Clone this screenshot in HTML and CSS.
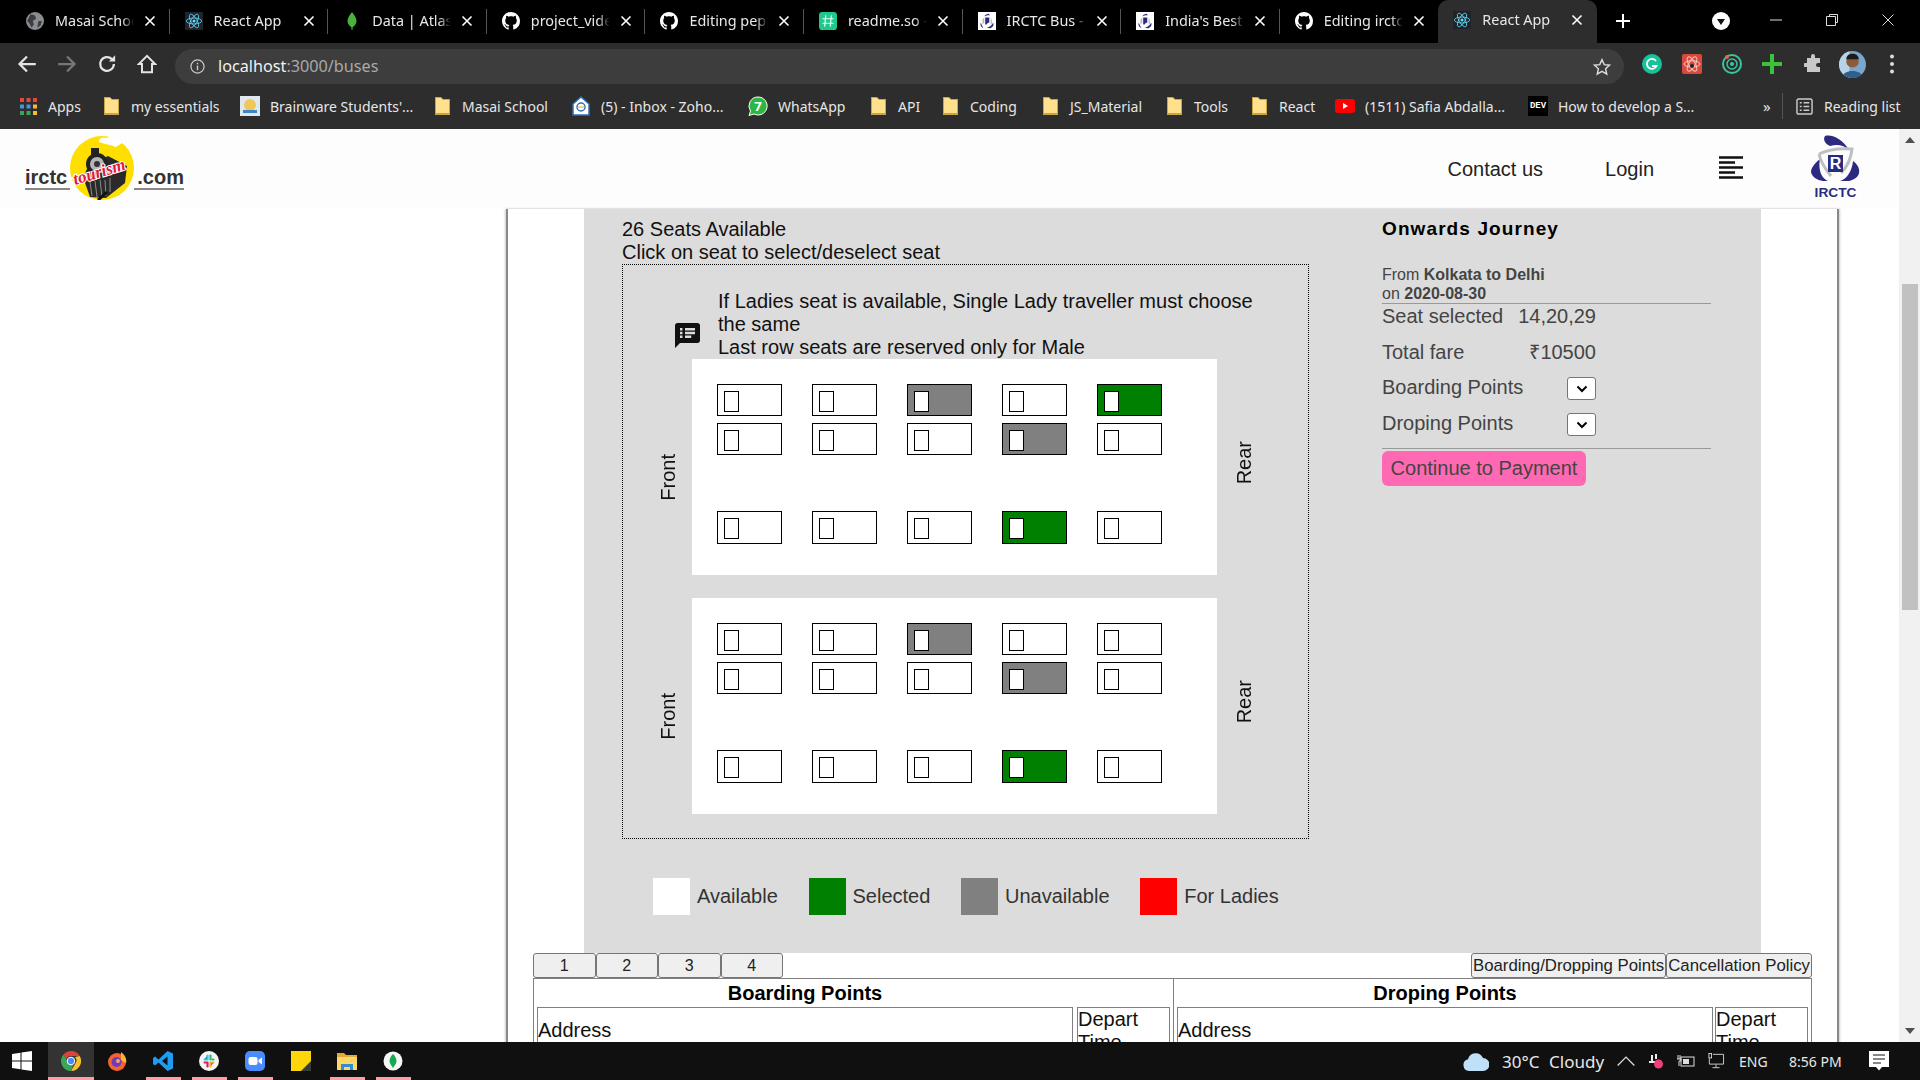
FILE: index.html
```html
<!DOCTYPE html>
<html lang="en">
  <head>
    <meta charset="UTF-8" />
    <title>React App</title>
    <link rel="stylesheet" href="styles.css">
  </head>
  <body>
    <svg class="defs" aria-hidden="true">
      <symbol id="i-close" viewBox="0 0 12 12"><path d="M1.5 1.5l9 9M10.500 1.500l-9 9" stroke="#fff" stroke-width="1.600" fill="none"/></symbol>
      <symbol id="i-globe" viewBox="0 0 16 16"><circle cx="8" cy="8" r="8" fill="#8a8d91"/><path d="M4 2l4 1 1 3-3 2 1 3-2 3-2-4-2-2zM11 8l3 0-1 4-3 2z" fill="#3b3d40"/></symbol>
      <symbol id="i-react" viewBox="0 0 20 20"><rect width="20" height="20" fill="#20232a"/><g fill="none" stroke="#61dafb" stroke-width=".9"><ellipse cx="10" cy="10" rx="8.500" ry="3.300"/><ellipse cx="10" cy="10" rx="8.500" ry="3.300" transform="rotate(60 10 10)"/><ellipse cx="10" cy="10" rx="8.500" ry="3.300" transform="rotate(120 10 10)"/></g><circle cx="10" cy="10" r="1.700" fill="#61dafb"/></symbol>
      <symbol id="i-leaf" viewBox="0 0 12 24"><path d="M6 0c3 4 6 8 6 12 0 4-3 7-5 8l-.5 4h-1L5 20c-2-1-5-4-5-8 0-4 3-8 6-12z" fill="#4caf3e"/></symbol>
      <symbol id="i-github" viewBox="0 0 16 16"><path fill="#fff" d="M8 0C3.58 0 0 3.58 0 8c0 3.54 2.29 6.53 5.47 7.59.4.07.55-.17.55-.38 0-.19-.01-.82-.01-1.49-2.01.37-2.53-.49-2.69-.94-.09-.23-.48-.94-.82-1.13-.28-.15-.68-.52-.01-.53.63-.01 1.08.58 1.23.82.72 1.21 1.87.87 2.33.66.07-.52.28-.87.51-1.07-1.78-.2-3.64-.89-3.64-3.95 0-.87.31-1.59.82-2.15-.08-.2-.36-1.02.08-2.12 0 0 .67-.21 2.2.82.64-.18 1.32-.27 2-.27.68 0 1.360.09 2 .27 1.53-1.04 2.2-.82 2.2-.82.44 1.1.16 1.92.08 2.12.51.56.82 1.27.82 2.15 0 3.07-1.87 3.75-3.65 3.95.29.25.54.73.54 1.48 0 1.07-.01 1.93-.01 2.2 0 .21.15.46.55.38A8.013 8.013 0 0016 8c0-4.42-3.58-8-8-8z"/></symbol>
      <symbol id="i-readme" viewBox="0 0 16 16"><rect width="16" height="16" rx="3" fill="#1fc98e"/><path d="M6 3L5 13M11 3l-1 10M3 6h10M3 10h10" stroke="#d9fff0" stroke-width="1.100"/></symbol>
      <symbol id="i-irctc" viewBox="0 0 20 20"><rect width="20" height="20" fill="#fff"/><path d="M3 12c-1 3 1 5 3 6-1-2-2-4-3-6zM17 12c1 3-1 5-3 6-2 0-3 0-4-1 3 0 5-2 7-5zM7 5c1-2 3-3 5-3 1 1 1 2 1 2-2-1-4 0-6 1z" fill="#2b2a80"/><path d="M8 6h4.500v6H11l-1.500 2H8z" fill="#2b2a80"/><path d="M5 8l2-2v6l-2 2zM15 8l-1-2v7h2z" fill="#b9bcc4"/></symbol>
      <symbol id="i-folder" viewBox="0 0 15 18"><path d="M0 0h6l2 2h7v16H0z" fill="#c9a443"/><path d="M1 1h5l2 2h6v13H1z" fill="#ffe08c"/></symbol>
    </svg>

    <div class="tabstrip">
      <div class="tab"><svg class="tab-icon"><use href="#i-globe"/></svg><span class="tab-title">Masai School | Learn</span><svg class="tab-x"><use href="#i-close"/></svg></div>
      <div class="tab"><svg class="tab-icon"><use href="#i-react"/></svg><span class="tab-title">React App</span><svg class="tab-x"><use href="#i-close"/></svg></div>
      <div class="tab"><svg class="tab-icon"><use href="#i-leaf"/></svg><span class="tab-title">Data | Atlas: MongoDB</span><svg class="tab-x"><use href="#i-close"/></svg></div>
      <div class="tab"><svg class="tab-icon"><use href="#i-github"/></svg><span class="tab-title">project_video_player</span><svg class="tab-x"><use href="#i-close"/></svg></div>
      <div class="tab"><svg class="tab-icon"><use href="#i-github"/></svg><span class="tab-title">Editing pepperfry</span><svg class="tab-x"><use href="#i-close"/></svg></div>
      <div class="tab"><svg class="tab-icon"><use href="#i-readme"/></svg><span class="tab-title">readme.so - </span><svg class="tab-x"><use href="#i-close"/></svg></div>
      <div class="tab"><svg class="tab-icon"><use href="#i-irctc"/></svg><span class="tab-title">IRCTC Bus - </span><svg class="tab-x"><use href="#i-close"/></svg></div>
      <div class="tab"><svg class="tab-icon"><use href="#i-irctc"/></svg><span class="tab-title">India's Best Online</span><svg class="tab-x"><use href="#i-close"/></svg></div>
      <div class="tab tab-before-active"><svg class="tab-icon"><use href="#i-github"/></svg><span class="tab-title">Editing irctc-clone</span><svg class="tab-x"><use href="#i-close"/></svg></div>
      <div class="tab tab-active"><svg class="tab-icon"><use href="#i-react"/></svg><span class="tab-title">React App</span><svg class="tab-x"><use href="#i-close"/></svg></div>
      <svg class="tab-new" viewBox="0 0 16 16"><path d="M8 1v14M1 8h14" stroke="#fff" stroke-width="2"/></svg>
      <svg class="tab-search" viewBox="0 0 18 18"><circle cx="9" cy="9" r="9" fill="#fff"/><path d="M5 7h8l-4 6z" fill="#111"/></svg>
      <div class="win-btns">
        <svg viewBox="0 0 12 12"><path d="M0 6h12" stroke="#ddd"/></svg>
        <svg viewBox="0 0 12 12"><path d="M3.500 2.500V.5h8v8h-2M.5 2.500h9v9h-9z" stroke="#ddd" fill="none"/></svg>
        <svg viewBox="0 0 12 12"><path d="M.5.5l11 11M11.500.5l-11 11" stroke="#ddd" fill="none"/></svg>
      </div>
    </div>

    <div class="toolbar">
      <div class="nav-btn"><svg viewBox="0 0 16 16"><path d="M15 8H2M8 2L2 8l6 6" stroke="#e3e3e3" stroke-width="1.800" fill="none"/></svg></div>
      <div class="nav-btn"><svg viewBox="0 0 16 16"><path d="M1 8h13M8 2l6 6-6 6" stroke="#777" stroke-width="1.800" fill="none"/></svg></div>
      <div class="nav-btn"><svg viewBox="0 0 16 16"><path d="M13.500 8a5.500 5.500 0 1 1-1.600-3.900" stroke="#e3e3e3" stroke-width="1.800" fill="none"/><path d="M14.500 1v5h-5z" fill="#e3e3e3"/></svg></div>
      <div class="nav-btn"><svg viewBox="0 0 16 16"><path d="M8 1.500L1.500 8H4v6.500h8V8h2.500z" stroke="#e3e3e3" stroke-width="1.600" fill="none"/></svg></div>
      <div class="omnibox">
        <svg class="omni-info" viewBox="0 0 16 16"><circle cx="8" cy="8" r="7" stroke="#ccc" stroke-width="1.300" fill="none"/><path d="M8 7v5M8 4v1.600" stroke="#ccc" stroke-width="1.500"/></svg>
        <span class="omni-url"><span class="omni-host">localhost</span>:3000/buses</span>
        <svg class="omni-star" viewBox="0 0 16 16"><path d="M8 1.500l2 4.400 4.700.5-3.500 3.200 1 4.700L8 11.900l-4.200 2.400 1-4.700L1.300 6.400 6 5.900z" stroke="#ddd" stroke-width="1.300" fill="none"/></svg>
      </div>
      <div class="ext-row">
        <div class="nav-btn"><svg viewBox="0 0 20 20"><circle cx="10" cy="10" r="10" fill="#15c39a"/><path d="M14 7a5 5 0 1 0 .5 5H10" stroke="#fff" stroke-width="1.800" fill="none"/></svg></div>
        <div class="nav-btn"><svg viewBox="0 0 20 20"><rect width="20" height="20" rx="2" fill="#d9483b"/><g fill="none" stroke="#f6c9c2" stroke-width="1"><ellipse cx="10" cy="10" rx="8" ry="3.200" transform="rotate(60 10 10)"/><ellipse cx="10" cy="10" rx="8" ry="3.200" transform="rotate(120 10 10)"/><ellipse cx="10" cy="10" rx="8" ry="3.200"/></g><circle cx="10" cy="12" r="2" fill="#222"/></svg></div>
        <div class="nav-btn"><svg viewBox="0 0 20 20"><g fill="none" stroke="#39c6a0"><circle cx="10" cy="10" r="9" stroke-width="2"/><circle cx="10" cy="10" r="5" stroke-width="1.500"/></g><circle cx="10" cy="10" r="2" fill="#39c6a0"/><circle cx="5" cy="3" r="2" fill="#e5693c"/></svg></div>
        <div class="nav-btn"><svg viewBox="0 0 20 20"><path d="M8 0h4v8h8v4h-8v8H8v-8H0V8h8z" fill="#3cc13b"/></svg></div>
        <div class="nav-btn nav-btn-puzzle"><svg viewBox="0 0 20 20"><path d="M7 2a2 2 0 0 1 4 0v2h5v5h-2a2 2 0 0 0 0 4h2v5H3v-5h-2a2 2 0 0 1 0-4h2V4h4z" fill="#c8c8c8"/></svg></div>
        <div class="nav-btn nav-btn-avatar"><svg viewBox="0 0 26 26"><defs><clipPath id="avatar"><circle cx="13" cy="13" r="13"/></clipPath></defs><g clip-path="url(#avatar)"><rect width="26" height="26" fill="#7aa6c9"/><path d="M0 0h10v26H0z" fill="#b9d3e6"/><circle cx="13" cy="10" r="6" fill="#8d5a3c"/><path d="M7 8c0-7 12-7 12 0z" fill="#1d1a1a"/><path d="M3 26c0-9 20-9 20 0z" fill="#2e5f8e"/></g></svg></div>
        <div class="nav-btn"><svg viewBox="0 0 4 16"><circle cx="2" cy="2" r="1.600" fill="#ddd"/><circle cx="2" cy="8" r="1.600" fill="#ddd"/><circle cx="2" cy="14" r="1.600" fill="#ddd"/></svg></div>
      </div>
    </div>

    <div class="bookmarks">
      <div class="bm"><svg class="bm-icon" viewBox="0 0 17 17"><g fill="#e8453c"><rect width="4" height="4"/><rect x="6.500" width="4" height="4"/><rect x="13" width="4" height="4"/></g><g fill="#4a90e2"><rect y="6.500" width="4" height="4"/><rect x="6.500" y="6.500" width="4" height="4"/></g><rect x="13" y="6.500" width="4" height="4" fill="#f9bb2d"/><g fill="#3aa757"><rect y="13" width="4" height="4"/><rect x="6.500" y="13" width="4" height="4"/></g><rect x="13" y="13" width="4" height="4" fill="#f9bb2d"/></svg>Apps</div>
      <div class="bm"><svg class="bm-icon bm-folder"><use href="#i-folder"/></svg>my essentials</div>
      <div class="bm"><svg class="bm-icon bm-wide" viewBox="0 0 20 20"><rect width="20" height="20" fill="#dfe8ef"/><circle cx="10" cy="9" r="6" fill="#f1c75b"/><path d="M3 14h14v3H3z" fill="#3f86c7"/></svg>Brainware Students'...</div>
      <div class="bm"><svg class="bm-icon bm-folder"><use href="#i-folder"/></svg>Masai School</div>
      <div class="bm"><svg class="bm-icon bm-wide" viewBox="0 0 20 20"><path d="M10 1l8 7v11H2V8z" fill="#fff" stroke="#2f6fb7" stroke-width="1.500"/><circle cx="10" cy="11" r="4" fill="none" stroke="#2f6fb7" stroke-width="1.500"/><path d="M6 11h8" stroke="#e7a33c"/></svg>(5) - Inbox - Zoho...</div>
      <div class="bm"><svg class="bm-icon bm-wide" viewBox="0 0 20 20"><path d="M10 1a9 9 0 1 1-4 17l-5 1.500L2.500 15A9 9 0 0 1 10 1z" fill="#2bb741" stroke="#fff"/><text x="10" y="15" class="bm-seven">7</text></svg>WhatsApp</div>
      <div class="bm"><svg class="bm-icon bm-folder"><use href="#i-folder"/></svg>API</div>
      <div class="bm"><svg class="bm-icon bm-folder"><use href="#i-folder"/></svg>Coding</div>
      <div class="bm"><svg class="bm-icon bm-folder"><use href="#i-folder"/></svg>JS_Material</div>
      <div class="bm"><svg class="bm-icon bm-folder"><use href="#i-folder"/></svg>Tools</div>
      <div class="bm"><svg class="bm-icon bm-folder"><use href="#i-folder"/></svg>React</div>
      <div class="bm"><svg class="bm-icon bm-wide" viewBox="0 0 20 14"><rect width="20" height="14" rx="3" fill="#f00"/><path d="M8 4l5 3-5 3z" fill="#fff"/></svg>(1511) Safia Abdalla...</div>
      <div class="bm"><span class="bm-dev">DEV</span>How to develop a S...</div>
      <div class="bm bm-more">»</div>
      <div class="bm bm-reading"><svg class="bm-icon" viewBox="0 0 18 18"><rect x="1" y="1" width="16" height="16" rx="2" stroke="#ccc" stroke-width="1.500" fill="none"/><path d="M4 5h2M8 5h6M4 9h2M8 9h6M4 13h2M8 13h6" stroke="#ccc" stroke-width="1.500"/></svg>Reading list</div>
    </div>

    <div class="viewport">
      <div class="page">
        <header class="site-header">
          <a class="brand">
            <span class="brand-word brand-word-left">irctc</span>
            <svg class="brand-badge" viewBox="0 0 64 64">
              <ellipse cx="32" cy="32" rx="32" ry="32" fill="#ffdf00"/>
              <path d="M29 4c2-3 5-3 7-2 3-2 7-1 9 1 3 0 5 2 7 4l-6 4-6-2-5-1-6-2z" fill="#fff"/>
              <rect x="21" y="12" width="8" height="8" fill="#222"/>
              <path d="M38 20l19 10-2 17-19 15-16-1-7-20 6-12z" fill="#2a2a2a"/>
              <circle cx="27" cy="28" r="11" fill="#222"/>
              <circle cx="27" cy="28" r="7" fill="#b5b5b5"/>
              <circle cx="27" cy="28" r="3" fill="#333"/>
              <path d="M20 46l2 14M25 45l2 16M30 44l2 17M35 44l1 16M40 42v14" stroke="#8c8c8c"/>
              <path d="M28 64l9-8" stroke="#111" stroke-width="3"/>
              <text class="brand-script" x="5" y="49" transform="rotate(-17 5 49)">tourism</text>
            </svg>
            <span class="brand-word brand-word-right">.com</span>
          </a>
          <nav class="site-nav">
            <a class="nav-link nav-contact">Contact us</a>
            <a class="nav-link nav-login">Login</a>
            <svg class="nav-menu" viewBox="0 0 24 23"><path d="M0 1.500h24M0 6.500h16M0 11.500h24M0 16.500h16M0 21.500h24" stroke="#111" stroke-width="2.600"/></svg>
            <div class="irctc-logo">
              <svg viewBox="0 0 49 46">
                <path d="M14 1C22-1 32 5 38 15 33 10 26 9 19 11 13 8 12 4 14 1z" fill="#2b2a80"/>
                <path d="M9 24C3 29 0 33 0 37c1 6 9 10 17 9C10 43 7 34 9 24z" fill="#2b2a80"/>
                <path d="M42 26c4 3 7 7 6 12-1 6-11 10-19 8 7-2 12-10 13-20z" fill="#2b2a80"/>
                <path d="M8 19c10-5 22-6 33-5-1 10-5 18-11 24M8 19c2 9 7 16 12 22" stroke="#bdbfc4" stroke-width="3" fill="none"/>
                <rect x="17" y="20" width="15" height="17" fill="#2b2a80"/>
                <text class="irctc-r" x="24.500" y="34">R</text>
              </svg>
              <span class="irctc-name">IRCTC</span>
            </div>
          </nav>
        </header>

        <main class="sheet">
          <section class="panel">
            <div class="seats-col">
              <p class="seats-head">26 Seats Available<br>Click on seat to select/deselect seat</p>
              <div class="seat-box">
                <div class="notice">
                  <svg class="notice-icon" viewBox="2 2 20 20"><path d="M20 2H4c-1.100 0-1.990.9-1.990 2L2 22l4-4h14c1.100 0 2-.9 2-2V4c0-1.100-.9-2-2-2zM8 14H6v-2h2v2zm0-3H6V9h2v2zm0-3H6V6h2v2zm7 6h-5v-2h5v2zm3-3h-8V9h8v2zm0-3h-8V6h8v2z" fill="#111"/></svg>
                  <p class="notice-text">If Ladies seat is available, Single Lady traveller must choose the same<br>Last row seats are reserved only for Male</p>
                </div>
                <div class="bus">
                  <span class="bus-label bus-front">Front</span>
                  <div class="deck">
                    <div class="seat"><i></i></div><div class="seat"><i></i></div><div class="seat seat-taken"><i></i></div><div class="seat"><i></i></div><div class="seat seat-picked"><i></i></div>
                    <div class="seat"><i></i></div><div class="seat"><i></i></div><div class="seat"><i></i></div><div class="seat seat-taken"><i></i></div><div class="seat"><i></i></div>
                    <div class="seat"><i></i></div><div class="seat"><i></i></div><div class="seat"><i></i></div><div class="seat seat-picked"><i></i></div><div class="seat"><i></i></div>
                  </div>
                  <span class="bus-label bus-rear">Rear</span>
                </div>
                <div class="bus bus-upper">
                  <span class="bus-label bus-front">Front</span>
                  <div class="deck">
                    <div class="seat"><i></i></div><div class="seat"><i></i></div><div class="seat seat-taken"><i></i></div><div class="seat"><i></i></div><div class="seat"><i></i></div>
                    <div class="seat"><i></i></div><div class="seat"><i></i></div><div class="seat"><i></i></div><div class="seat seat-taken"><i></i></div><div class="seat"><i></i></div>
                    <div class="seat"><i></i></div><div class="seat"><i></i></div><div class="seat"><i></i></div><div class="seat seat-picked"><i></i></div><div class="seat"><i></i></div>
                  </div>
                  <span class="bus-label bus-rear">Rear</span>
                </div>
              </div>
              <div class="legend">
                <div class="legend-item"><span class="swatch swatch-free"></span>Available</div>
                <div class="legend-item"><span class="swatch swatch-picked"></span>Selected</div>
                <div class="legend-item"><span class="swatch swatch-taken"></span>Unavailable</div>
                <div class="legend-item"><span class="swatch swatch-ladies"></span>For Ladies</div>
              </div>
            </div>
            <aside class="summary">
              <h3 class="summary-title">Onwards Journey</h3>
              <p class="summary-route">From <b>Kolkata to Delhi</b><br>on <b>2020-08-30</b></p>
              <div class="summary-rows">
                <div class="summary-row"><span>Seat selected</span><span>14,20,29</span></div>
                <div class="summary-row"><span>Total fare</span><span>₹10500</span></div>
                <div class="summary-row"><span>Boarding Points</span><select class="point-select"><option></option></select></div>
                <div class="summary-row"><span>Droping Points</span><select class="point-select"><option></option></select></div>
              </div>
              <button class="pay-btn">Continue to Payment</button>
            </aside>
          </section>

          <section class="details">
            <div class="detail-tabs">
              <div class="tab-group">
                <button class="page-tab page-num">1</button><button class="page-tab page-num">2</button><button class="page-tab page-num">3</button><button class="page-tab page-num">4</button>
              </div>
              <div class="tab-group">
                <button class="page-tab page-text">Boarding/Dropping Points</button><button class="page-tab page-text">Cancellation Policy</button>
              </div>
            </div>
            <div class="points">
              <div class="points-col">
                <h4 class="points-title">Boarding Points</h4>
                <div class="points-cells"><div class="cell cell-address">Address</div><div class="cell">Depart Time</div></div>
              </div>
              <div class="points-col points-col-right">
                <h4 class="points-title">Droping Points</h4>
                <div class="points-cells"><div class="cell cell-address">Address</div><div class="cell">Depart Time</div></div>
              </div>
            </div>
          </section>
        </main>
      </div>
      <div class="scrollbar">
        <span class="scroll-up"></span>
        <span class="scroll-thumb"></span>
        <span class="scroll-down"></span>
      </div>
    </div>

    <footer class="taskbar">
      <div class="start"><svg viewBox="0 0 20 20"><path d="M0 3l8.500-1.200V9.500H0zM9.500 1.600L20 0v9.500H9.500zM0 10.500h8.500v7.700L0 17zM9.500 10.500H20V20L9.500 18.400z" fill="#fff"/></svg></div>
      <div class="tile tile-open tile-active"><svg viewBox="0 0 20 20"><path d="M10 0a10 10 0 0 1 8.700 5H10a5 5 0 0 0-4.700 3.300L2.500 3.500A10 10 0 0 1 10 0z" fill="#db4437"/><path d="M18.700 5A10 10 0 0 1 10 20l4.300-7.500A5 5 0 0 0 14 6z" fill="#fbc02d"/><path d="M10 20A10 10 0 0 1 2.500 3.500l4.300 7.500a5 5 0 0 0 5.500 3z" fill="#3aa757"/><circle cx="10" cy="10" r="3.800" fill="#4a8af4" stroke="#fff"/></svg></div>
      <div class="tile"><svg viewBox="0 0 20 20"><circle cx="10" cy="11" r="9" fill="#f5642d"/><path d="M14 1c4 3 6 7 5 11l-5-3z" fill="#ffb62e"/><circle cx="9.500" cy="11" r="5" fill="#6d3bbd"/><circle cx="11" cy="10" r="2" fill="#f5a25d"/></svg></div>
      <div class="tile tile-open"><svg viewBox="0 0 20 20"><path d="M14.500 0L20 2.500v15L14.500 20 5.500 11.500 2 14.500 0 13V7l2-1.500 3.500 3zM14.500 5.500L9 10l5.500 4.500z" fill="#1f9cf0"/></svg></div>
      <div class="tile tile-open"><svg viewBox="0 0 20 20"><circle cx="10" cy="10" r="10" fill="#f4f4f4"/><g stroke-width="2.200" stroke-linecap="round"><path d="M8.500 4.500v4h-3" stroke="#36c5f0"/><path d="M11.500 4.500v4" stroke="#2eb67d"/><path d="M14.500 8.500h-1" stroke="#2eb67d"/><path d="M14.500 11.500h-3v4" stroke="#ecb22e"/><path d="M8.500 11.500v4M5.500 11.500h3" stroke="#e01e5a"/></g></svg></div>
      <div class="tile tile-open"><svg viewBox="0 0 20 20"><rect width="20" height="20" rx="5" fill="#4a8cff"/><rect x="3.500" y="6" width="9" height="8" rx="2" fill="#fff"/><path d="M13.500 9l3.500-2.500v7L13.500 11z" fill="#fff"/></svg></div>
      <div class="tile"><svg viewBox="0 0 20 20"><rect width="20" height="20" fill="#ffd60a"/><path d="M20 10v10H10z" fill="#3a3a36"/></svg></div>
      <div class="tile tile-open"><svg viewBox="0 0 20 20"><path d="M0 2h7l2 2h11v15H0z" fill="#e2a93b"/><rect y="6" width="20" height="13" fill="#ffd768"/><path d="M4 19v-6h12v6h-3v-3H7v3z" fill="#2f8fd3"/></svg></div>
      <div class="tile tile-open"><svg viewBox="0 0 20 20"><circle cx="10" cy="10" r="9.500" fill="#f6f6f6"/><path d="M10 3c2.500 2.500 3.500 5 3.500 7s-2 5-3.500 7c-1.500-2-3.500-5-3.500-7s1-4.500 3.500-7z" fill="#13aa52"/></svg></div>
      <div class="tray">
        <svg class="tray-cloud" viewBox="0 0 26 20"><path d="M6 20a6 6 0 0 1-1-11.800A8 8 0 0 1 20 7a6.500 6.500 0 0 1 0 13z" fill="#bfe0f7"/></svg>
        <span class="tray-weather">30°C</span>
        <span class="tray-weather">Cloudy</span>
        <svg class="tray-icon" viewBox="0 0 14 8"><path d="M.5 7.500L7 1l6.500 6.500" stroke="#ddd" fill="none"/></svg>
        <svg class="tray-icon" viewBox="0 0 16 16"><path d="M3 2h2v6H3zM7 1h2v5H7zM1 8h6v2H1z" fill="#eee"/><circle cx="10.500" cy="11" r="4.500" fill="#ee3f78"/></svg>
        <svg class="tray-icon" viewBox="0 0 18 14"><rect x="4" y="3" width="13" height="9" stroke="#ddd" fill="none"/><rect x="6" y="5" width="6" height="5" fill="#ddd"/><path d="M1 1v4M3 1v4M0 5h4v2H2v5" stroke="#ddd" fill="none"/></svg>
        <svg class="tray-icon" viewBox="0 0 18 18"><path d="M5.500 1.500h12v11H1.500V6M9 13v3M5 16.500h8" stroke="#ddd" fill="none"/><rect x="1" y=".5" width="3" height="5" stroke="#ddd" fill="none"/></svg>
        <span class="tray-text">ENG</span>
        <span class="tray-text">8:56 PM</span>
        <svg class="tray-note" viewBox="0 0 20 20"><path d="M0 0h20v16h-7l-3 3.500L7 16H0z" fill="#fff"/><path d="M4 4h12M4 8h12M4 12h8" stroke="#111"/></svg>
      </div>
    </footer>
  </body>
</html>
```
FILE: styles.css
```css
* {
  margin: 0;
  padding: 0;
  box-sizing: border-box;
}

body {
  display: flex;
  flex-direction: column;
  height: 100vh;
  overflow: hidden;
  font-family: "Liberation Sans", Arial, sans-serif;
  font-size: 20px;
  line-height: 23px;
  color: #111;
  background-color: #fff;
}

.defs {
  display: none;
}

/* browser chrome */
.tabstrip {
  display: flex;
  align-items: center;
  flex: none;
  height: 43px;
  padding-left: 11px;
  font-family: "Noto Sans", sans-serif;
  font-size: 14.4px;
  color: #e8e8e8;
  background-color: #000;
}

.tab {
  display: flex;
  align-items: center;
  flex: none;
  width: 158.6px;
  height: 25px;
  padding-bottom: 2px;
  padding-left: 15px;
  border-right: 1px solid #555;
}

.tab-before-active {
  border-right: 0;
}

.tab-active {
  align-self: flex-end;
  height: 43px;
  padding-bottom: 4px;
  border-right: 0;
  border-radius: 10px 10px 0 0;
  background-color: #2d2d2d;
}

.tab-icon {
  flex: none;
  width: 18px;
  height: 18px;
}

.tab-title {
  flex: none;
  width: 79px;
  margin-left: 11px;
  overflow: hidden;
  white-space: nowrap;
  -webkit-mask-image: linear-gradient(to right, #000 85%, transparent);
  mask-image: linear-gradient(to right, #000 85%, transparent);
}

.tab-x {
  flex: none;
  width: 12px;
  height: 12px;
  margin-left: 10px;
}

.tab-new {
  flex: none;
  width: 16px;
  height: 16px;
  margin-bottom: 2px;
  margin-left: 18px;
}

.tab-search {
  flex: none;
  width: 18px;
  height: 18px;
  margin-bottom: 2px;
  margin-left: 81px;
}

.win-btns {
  display: flex;
  gap: 44px;
  margin-bottom: 4px;
  margin-left: 40px;
}

.win-btns svg {
  width: 12px;
  height: 12px;
}

.toolbar {
  display: flex;
  align-items: center;
  flex: none;
  height: 42px;
  padding-left: 7px;
  background-color: #2d2d2d;
}

.nav-btn {
  display: flex;
  align-items: center;
  justify-content: center;
  flex: none;
  width: 40px;
  height: 28px;
}

.nav-btn svg {
  height: 20px;
  width: 20px;
}

.nav-btn-puzzle svg {
  margin-left: 3px;
}

.nav-btn-avatar svg {
  width: 27px;
  height: 27px;
}

.omnibox {
  display: flex;
  align-items: center;
  flex: none;
  width: 1449px;
  height: 35px;
  margin-top: 5px;
  margin-left: 8px;
  padding: 0 13px 0 15px;
  border-radius: 18px;
  font-family: "Noto Sans", sans-serif;
  font-size: 16.2px;
  color: #a9a9a9;
  background-color: #3d3d3d;
}

.omni-info {
  width: 15px;
  height: 15px;
}

.omni-url {
  margin-left: 13px;
}

.omni-host {
  color: #f1f1f1;
}

.omni-star {
  width: 18px;
  height: 18px;
  margin-left: auto;
}

.ext-row {
  display: flex;
  margin-left: 8px;
}

.bookmarks {
  display: grid;
  grid-template-columns: 84px 136px 195px 136px 177px 123px 72px 100px 124px 85px 83px 193px 235px 19px auto;
  align-items: center;
  flex: none;
  height: 44px;
  padding-bottom: 2px;
  padding-left: 20px;
  font-family: "Noto Sans", sans-serif;
  font-size: 14px;
  color: #e6e6e6;
  background-color: #2d2d2d;
}

.bm {
  display: flex;
  align-items: center;
  white-space: nowrap;
}

.bm-icon {
  flex: none;
  width: 17px;
  height: 17px;
  margin-right: 11px;
}

.bm-folder {
  width: 15px;
  height: 18px;
  margin-right: 12px;
}

.bm-wide {
  width: 20px;
  height: 20px;
  margin-right: 10px;
}

.bm-seven {
  font-size: 13px;
  font-weight: 700;
  text-anchor: middle;
  fill: #fff;
}

.bm-dev {
  display: flex;
  align-items: center;
  justify-content: center;
  flex: none;
  width: 20px;
  height: 20px;
  margin-right: 10px;
  font-family: "Liberation Mono", monospace;
  font-size: 9px;
  font-weight: 700;
  color: #fff;
  background-color: #000;
}

.bm-more {
  font-size: 15px;
}

.bm-reading {
  height: 26px;
  padding-left: 13px;
  border-left: 1px solid #555;
}

/* page */
.viewport {
  display: flex;
  flex: 1;
  min-height: 0;
}

.page {
  flex: 1;
  min-width: 0;
  overflow: hidden;
}

.site-header {
  display: flex;
  align-items: center;
  justify-content: space-between;
  height: 80px;
  padding: 0 39px 0 25px;
  background-color: #fdfdfd;
}

.brand {
  display: flex;
  align-items: flex-end;
  margin-top: -2px;
}

.brand-word {
  margin-bottom: 10px;
  border-bottom: 2px solid #888;
  font-size: 20px;
  font-weight: 700;
  line-height: 21px;
  color: #333;
}

.brand-word-left {
  padding-right: 3px;
}

.brand-word-right {
  padding-left: 3px;
}

.brand-badge {
  width: 64px;
  height: 64px;
}

.brand-script {
  font-family: "Liberation Serif", serif;
  font-size: 17px;
  font-style: italic;
  font-weight: 700;
  fill: #e0173a;
  stroke: #fff;
  stroke-width: 2px;
  paint-order: stroke;
}

.site-nav {
  display: flex;
  align-items: center;
}

.nav-link {
  margin-top: 1px;
  color: #222;
}

.nav-contact {
  margin-right: 62px;
}

.nav-login {
  margin-right: 65px;
}

.nav-menu {
  width: 24px;
  height: 23px;
  margin-right: 68px;
  margin-bottom: 4px;
}

.irctc-logo {
  display: flex;
  flex-direction: column;
  align-items: center;
  width: 49px;
  margin-bottom: 4px;
}

.irctc-logo svg {
  width: 49px;
  height: 46px;
}

.irctc-r {
  font-size: 16px;
  font-weight: 700;
  text-anchor: middle;
  fill: #fff;
}

.irctc-name {
  margin-top: 5px;
  font-size: 13.7px;
  font-weight: 700;
  line-height: 13px;
  color: #2b2a80;
}

.sheet {
  width: 1333px;
  margin-left: 506px;
  border-right: 2px solid #888;
  border-left: 2px solid #888;
  box-shadow: -1px 0 2px #ccc, 1px 0 2px #ccc;
}

.panel {
  display: flex;
  width: 1177px;
  height: 744px;
  margin-left: 76px;
  padding: 9px 0 0 38px;
  background-color: #dcdcdc;
}

.seats-col {
  flex: none;
  width: 687px;
}

.seat-box {
  height: 575px;
  padding-top: 25px;
  border: 1px dotted #000;
}

.notice {
  display: flex;
  align-items: flex-start;
}

.notice-icon {
  flex: none;
  width: 25px;
  height: 25px;
  margin: 33px 18px 0 52px;
}

.notice-text {
  width: 550px;
}

.bus {
  display: grid;
  grid-template-columns: 69px 525px 1fr;
  align-items: center;
}

.bus-upper {
  margin-top: 23px;
}

.bus-label {
  justify-self: center;
  writing-mode: vertical-rl;
  transform: rotate(180deg);
}

.bus-front {
  margin-top: 21px;
  margin-left: 21px;
}

.bus-rear {
  margin-bottom: 8px;
  margin-left: -36px;
}

.deck {
  display: grid;
  grid-template-columns: repeat(5, 65px);
  grid-template-rows: 32px 32px 33px;
  column-gap: 30px;
  row-gap: 7px;
  height: 216px;
  padding: 25px 0 0 25px;
  background-color: #fff;
}

.seat {
  padding: 6px 0 0 6px;
  border: 1px solid #000;
  background-color: #fff;
}

.seat:nth-child(n + 11) {
  margin-top: 49px;
  margin-bottom: -49px;
}

.seat i {
  display: block;
  width: 15px;
  height: 21px;
  border: 1px solid #000;
  background-color: #fff;
}

.seat-taken {
  background-color: #808080;
}

.seat-picked {
  background-color: #008000;
}

.legend {
  display: flex;
  gap: 30.7px;
  margin: 39px 0 0 31px;
}

.legend-item {
  display: flex;
  align-items: center;
  gap: 7px;
  color: #333;
}

.swatch {
  width: 37px;
  height: 37px;
}

.swatch-free {
  background-color: #fff;
}

.swatch-picked {
  background-color: #008000;
}

.swatch-taken {
  background-color: #808080;
}

.swatch-ladies {
  background-color: #f00;
}

.summary {
  flex: none;
  width: 329px;
  margin-left: 73px;
  color: #444;
}

.summary-title {
  margin-top: -1px;
  font-size: 19px;
  letter-spacing: 1.1px;
  color: #000;
}

.summary-route {
  margin-top: 25px;
  border-bottom: 1px solid #999;
  font-size: 16px;
  line-height: 19px;
}

.summary-rows {
  width: 329px;
  padding-top: 1px;
  padding-bottom: 13px;
  border-bottom: 1px solid #999;
}

.summary-row {
  display: flex;
  align-items: center;
  justify-content: space-between;
  width: 214px;
  height: 23px;
  margin-bottom: 13px;
}

.summary-row:nth-child(2) {
  margin-bottom: 12px;
}

.summary-rows .summary-row:last-child {
  margin-bottom: 0;
}

.point-select {
  width: 29px;
  height: 23px;
  margin-top: 2px;
  border: 1px solid #767676;
  border-radius: 3px;
  -webkit-appearance: none;
  appearance: none;
  background: #fff url("data:image/svg+xml,%3Csvg xmlns='http://www.w3.org/2000/svg' viewBox='0 0 12 8'%3E%3Cpath d='M1.500 1.500L6 6l4.500-4.500' stroke='%23000' stroke-width='2' fill='none'/%3E%3C/svg%3E") center / 12px 8px no-repeat;
}

.pay-btn {
  width: 204px;
  height: 35px;
  margin-top: 2px;
  border: 0;
  border-radius: 6px;
  font-family: inherit;
  font-size: 20px;
  color: #444;
  background-color: #ff69b4;
}

.details {
  width: 1279px;
  margin-left: 25px;
}

.detail-tabs {
  display: flex;
  justify-content: space-between;
  height: 25px;
}

.tab-group {
  display: flex;
}

.page-tab {
  height: 25px;
  border: 1px solid #767676;
  border-radius: 3px;
  font-family: inherit;
  color: #222;
  background-color: #efefef;
}

.page-num {
  width: 62.5px;
  font-size: 16px;
}

.page-text {
  padding: 0 1px;
  font-size: 16.8px;
}

.points {
  display: flex;
  border: 1px solid #808080;
}

.points-col {
  width: 640px;
  padding: 0 3px;
}

.points-col-right {
  width: 639px;
  border-left: 1px solid #808080;
}

.points-title {
  width: 536px;
  font-size: 20px;
  line-height: 28px;
  text-align: center;
  color: #000;
}

.points-cells {
  display: flex;
  justify-content: space-between;
}

.cell {
  display: flex;
  align-items: center;
  width: 93px;
  height: 48px;
  padding: 0;
  border: 1px solid #808080;
}

.cell-address {
  width: 536px;
  padding: 0 0 2px;
}

/* fake scrollbar */
.scrollbar {
  display: flex;
  flex-direction: column;
  align-items: center;
  flex: none;
  width: 21px;
  padding: 8px 0;
  background-color: #f1f1f1;
}

.scroll-up,
.scroll-down {
  width: 0;
  height: 0;
  border-right: 5px solid transparent;
  border-left: 5px solid transparent;
}

.scroll-up {
  border-bottom: 6px solid #505050;
}

.scroll-down {
  margin-top: auto;
  border-top: 6px solid #505050;
}

.scroll-thumb {
  width: 16px;
  height: 326px;
  margin-top: 141px;
  background-color: #c1c1c1;
}

/* windows taskbar */
.taskbar {
  display: flex;
  align-items: center;
  flex: none;
  height: 38px;
  font-family: "Noto Sans", sans-serif;
  color: #e8e8e8;
  background-color: #101010;
}

.start {
  display: flex;
  flex: none;
  width: 48px;
  padding-left: 12px;
}

.start svg {
  width: 20px;
  height: 20px;
}

.tile {
  display: flex;
  align-items: center;
  justify-content: center;
  flex: none;
  width: 46px;
  height: 38px;
}

.tile svg {
  width: 20px;
  height: 20px;
}

.tile-open {
  background: linear-gradient(#ff9fa5, #ff9fa5) center bottom / 35px 3px no-repeat;
}

.tile-active {
  background: linear-gradient(#ff9fa5, #ff9fa5) center bottom / 100% 3px no-repeat, #333;
}

.tray {
  display: grid;
  grid-template-columns: 39px 47px 68px 30px 30px 30px 32px 50px 80px auto;
  align-items: center;
  margin-left: auto;
  padding-right: 31px;
}

.tray-cloud {
  width: 26px;
  height: 20px;
}

.tray-weather {
  font-size: 17px;
}

.tray-icon {
  width: 18px;
  height: 16px;
}

.tray-text {
  font-size: 14px;
}

.tray-note {
  width: 20px;
  height: 20px;
}
```
